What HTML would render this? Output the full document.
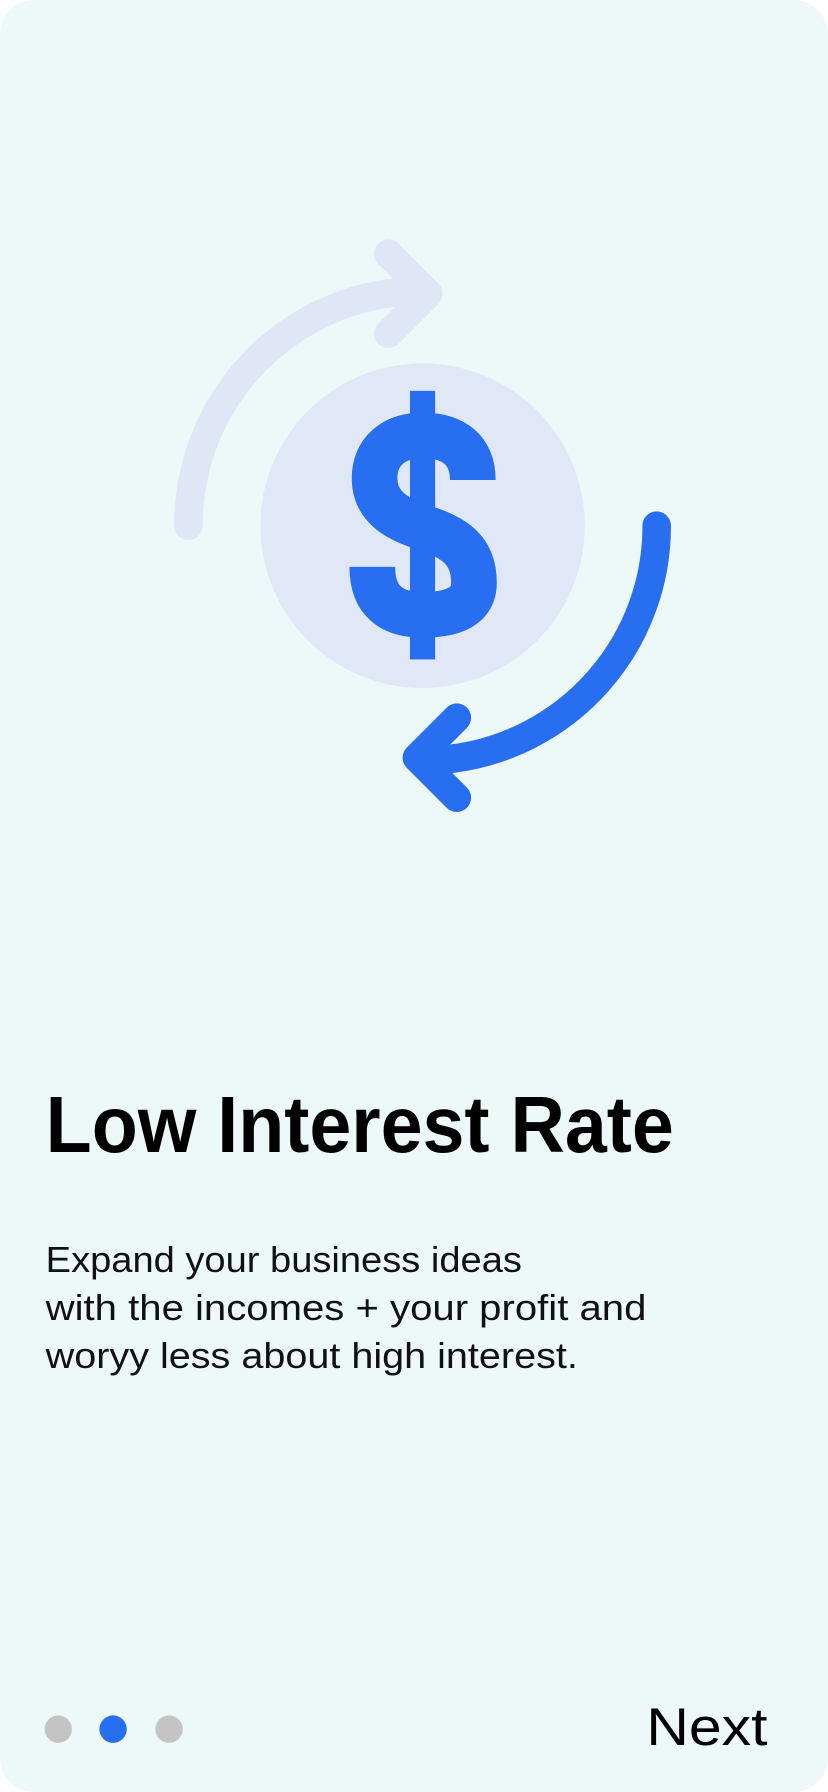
<!DOCTYPE html>
<html><head><meta charset="utf-8"><style>
html,body{margin:0;padding:0;background:#fff;width:828px;height:1792px;overflow:hidden}
svg{display:block}
</style></head><body>
<svg width="828" height="1792" viewBox="0 0 725 1568" preserveAspectRatio="none" xmlns="http://www.w3.org/2000/svg">
<rect x="0" y="0" width="725" height="1568" rx="30" fill="#EDF8F8"/>
<circle cx="370" cy="460" r="142" fill="#E0E7F6"/>
<path d="M165 460 A205 205 0 0 1 345 256" fill="none" stroke="#DFE6F5" stroke-width="25" stroke-linecap="round"/>
<path d="M340 222 L375 257 L340 292" fill="none" stroke="#DFE6F5" stroke-width="25" stroke-linecap="round" stroke-linejoin="round"/>
<path d="M575 460 A205 205 0 0 1 395 664" fill="none" stroke="#276EF1" stroke-width="25" stroke-linecap="round"/>
<path d="M400 628 L365 663 L400 698" fill="none" stroke="#276EF1" stroke-width="25" stroke-linecap="round" stroke-linejoin="round"/>
<rect x="359" y="342" width="22" height="235" fill="#276EF1"/>
<path d="M414 420 C414 393 396 381 370 381 C344 381 328 396 328 418 C328 445 350 455 372 462 C396 470 415 480 415 510 C415 530 398 538 370 538 C342 538 326 525 326 496" fill="none" stroke="#276EF1" stroke-width="40"/>
<text x="40" y="1008" font-family="Liberation Sans, sans-serif" font-weight="bold" font-size="70" fill="#000" textLength="550" lengthAdjust="spacingAndGlyphs">Low Interest Rate</text>
<g font-family="Liberation Sans, sans-serif" font-size="32" fill="#111">
<text x="40" y="1113" textLength="417" lengthAdjust="spacingAndGlyphs">Expand your business ideas</text>
<text x="40" y="1155" textLength="526" lengthAdjust="spacingAndGlyphs">with the incomes + your profit and</text>
<text x="40" y="1197" textLength="466" lengthAdjust="spacingAndGlyphs">woryy less about high interest.</text>
</g>
<circle cx="51" cy="1513" r="12" fill="#C4C4C4"/>
<circle cx="99" cy="1513" r="12" fill="#276EF1"/>
<circle cx="148" cy="1513" r="12" fill="#C4C4C4"/>
<text x="566" y="1527" font-family="Liberation Sans, sans-serif" font-size="46" fill="#000" textLength="106" lengthAdjust="spacingAndGlyphs">Next</text>
</svg>
</body></html>
